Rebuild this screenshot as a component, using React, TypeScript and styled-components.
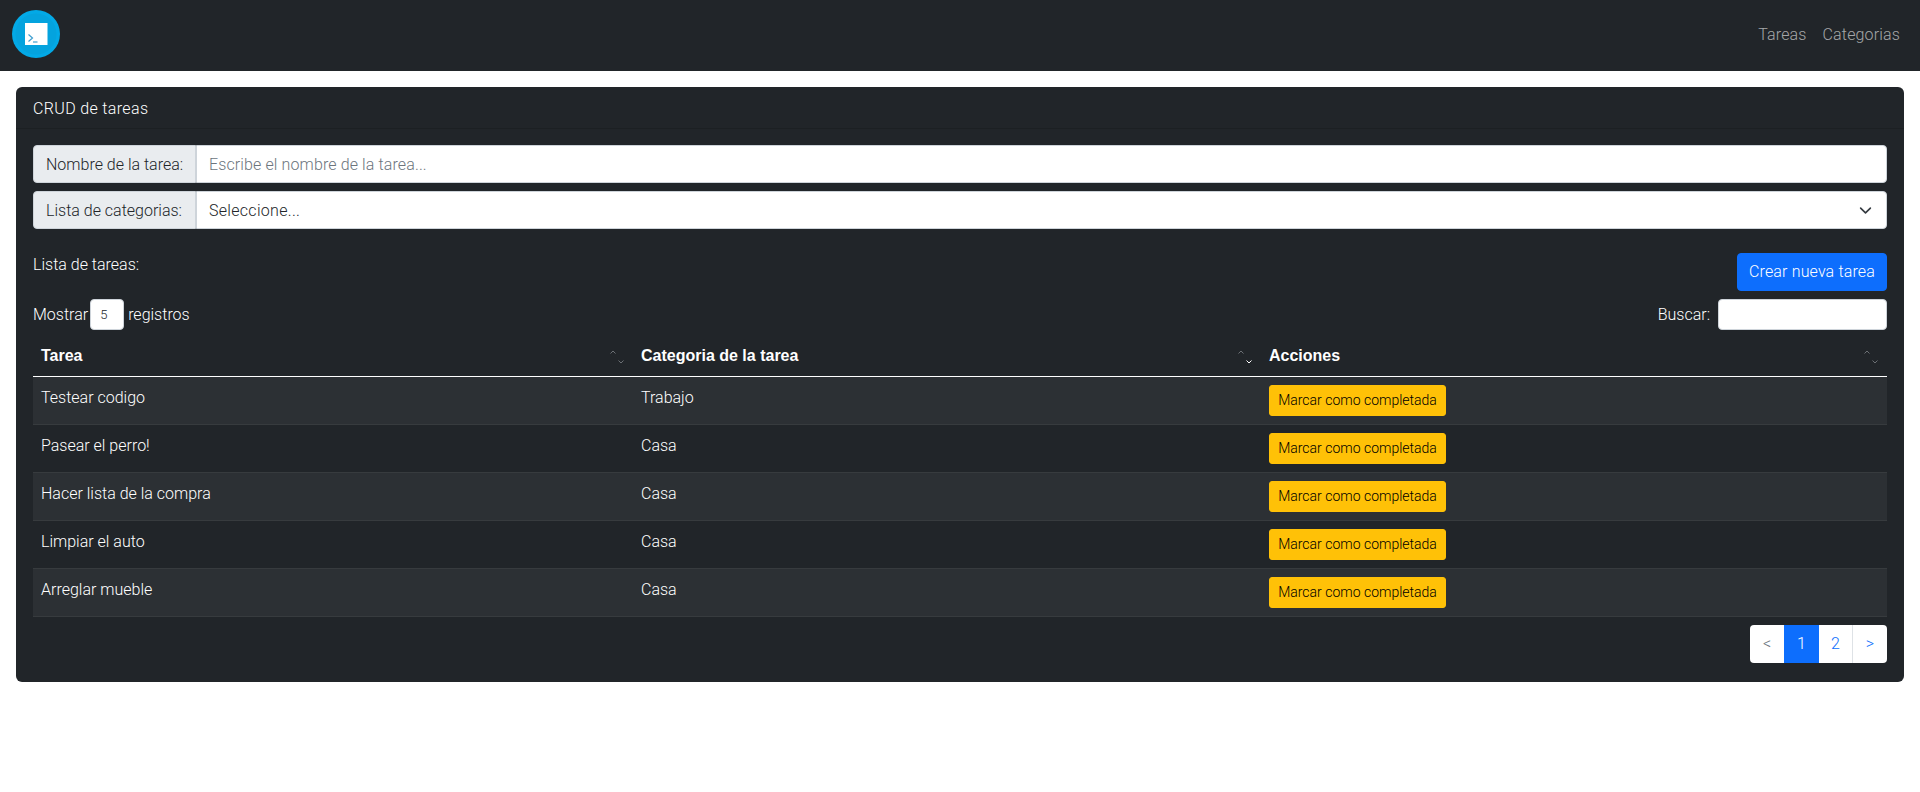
import { createGlobalStyle } from "styled-components"
import styled from "styled-components"

const GlobalStyle = createGlobalStyle`
  html, body {
    margin: 0;
    background: #fff;
    font-family: Roboto, "Liberation Sans", sans-serif;
    font-size: 16px;
    font-weight: 300;
    line-height: 24px;
    color: #212529;
  }
  * { box-sizing: border-box; }
`

const Navbar = styled.nav`
  height: 71px;
  background: #212529;
  display: flex;
  align-items: center;
  justify-content: space-between;
  padding: 0 20px 0 12px;
`

const LogoBadge = styled.div`
  width: 48px;
  height: 48px;
  margin-bottom: 3px;
`

const NavLinks = styled.div`
  display: flex;
  gap: 16px;
  margin-bottom: 2px;
  letter-spacing: 0.15px;
`

const NavLink = styled.a`
  color: rgba(255, 255, 255, 0.6);
`

const Main = styled.main`
  padding: 16px;
`

const Card = styled.section`
  background: #212529;
  border-radius: 6px;
  color: #fff;
  height: 595px;
`

const CardHeader = styled.header`
  height: 42px;
  padding: 10px 17px 0;
  letter-spacing: 0.35px;
  border-bottom: 1px solid rgba(0, 0, 0, 0.125);
`

const CardBody = styled.div`
  padding: 16px 17px;
`

const InputGroup = styled.div`
  display: flex;
  height: 38px;
  margin-bottom: 8px;
`

const GroupLabel = styled.label`
  width: 163px;
  flex: none;
  background: #e9ecef;
  border: 1px solid #ced4da;
  border-radius: 4px 0 0 4px;
  color: #212529;
  padding: 6px 12px 0;
  line-height: 26px;
  white-space: nowrap;
`

const GroupInput = styled.input`
  flex: 1;
  min-width: 0;
  border: 1px solid #ced4da;
  border-radius: 0 4px 4px 0;
  padding: 1px 12px 0;
  font: inherit;
  letter-spacing: 0.12px;
  color: #212529;
  outline: none;
  &::placeholder { color: #6c757d; opacity: 1; }
`

const GroupSelect = styled.div`
  flex: 1;
  display: flex;
  align-items: center;
  justify-content: space-between;
  background: #fff;
  border: 1px solid #ced4da;
  border-radius: 0 4px 4px 0;
  padding: 1px 14px 0 12px;
  letter-spacing: 0.3px;
  color: #212529;
`

const ListHeader = styled.div`
  display: flex;
  justify-content: space-between;
  margin-top: 24px;
  height: 38px;
`

const PrimaryButton = styled.button`
  width: 150px;
  height: 38px;
  padding: 0;
  background: #0d6efd;
  border: 1px solid #0d6efd;
  border-radius: 4px;
  color: #fff;
  font: inherit;
  letter-spacing: 0.15px;
`

const TableTools = styled.div`
  display: flex;
  justify-content: space-between;
  align-items: center;
  height: 31px;
  margin-top: 8px;
`

const ToolGroup = styled.div`
  display: flex;
  align-items: center;
  gap: 4px;
`

const LengthBox = styled.div`
  width: 34px;
  height: 31px;
  margin-left: -2px;
  background: #fff;
  border: 1px solid #ced4da;
  border-radius: 4px;
  color: #212529;
  font-size: 13px;
  line-height: 29px;
  padding-left: 9px;
`

const SearchBox = styled.input`
  width: 169px;
  height: 31px;
  margin-left: 4px;
  border: 1px solid #ced4da;
  border-radius: 4px;
  outline: none;
`

const Table = styled.table`
  width: 100%;
  border-collapse: collapse;
  table-layout: fixed;
`

const HeadCell = styled.th<{ $width: number }>`
  position: relative;
  width: ${({ $width }) => $width}px;
  height: 46px;
  padding: 6px 8px 0;
  text-align: left;
  font-family: "Liberation Sans", Arial, sans-serif;
  font-weight: 700;
  border-bottom: 1px solid #fff;
`

const SortMark = styled.span<{ $dir: "up" | "down"; $active?: boolean }>`
  position: absolute;
  right: ${({ $dir }) => ($dir === "up" ? 17 : 9)}px;
  top: ${({ $dir }) => ($dir === "up" ? 20 : 30)}px;
  width: 6px;
  height: 4px;
  color: ${({ $active }) => ($active ? "#fff" : "#6c7075")};
  svg { display: block; }
`

const Row = styled.tr<{ $odd: boolean }>`
  background: ${({ $odd }) => ($odd ? "#2c3034" : "#212529")};
`

const Cell = styled.td`
  height: 48px;
  padding: 8px;
  line-height: 26px;
  vertical-align: top;
  border-bottom: 1px solid #373b3e;
`

const ActionButton = styled.button`
  width: 177px;
  height: 31px;
  padding: 0;
  background: #ffc107;
  border: 1px solid #ffc107;
  border-radius: 3px;
  color: #000;
  font: inherit;
  font-size: 14px;
  display: block;
`

const Pager = styled.div`
  display: flex;
  justify-content: flex-end;
  margin-top: 8px;
`

const PageItem = styled.a<{ $width: number; $active?: boolean; $muted?: boolean; $first?: boolean; $last?: boolean }>`
  height: 38px;
  width: ${({ $width }) => $width}px;
  display: flex;
  align-items: center;
  justify-content: center;
  background: ${({ $active }) => ($active ? "#0d6efd" : "#fff")};
  color: ${({ $active, $muted }) => ($active ? "#fff" : $muted ? "#6c757d" : "#0d6efd")};
  border-left: ${({ $last }) => ($last ? "1px solid #dee2e6" : "0")};
  border-radius: ${({ $first, $last }) => ($first ? "4px 0 0 4px" : $last ? "0 4px 4px 0" : "0")};
`

const Chevron = () => (
  <svg width="13" height="13" viewBox="0 0 16 16" fill="none">
    <path d="M2 5l6 6 6-6" stroke="#343a40" strokeWidth="2" strokeLinecap="round" strokeLinejoin="round" />
  </svg>
)

const Logo = () => (
  <svg width="48" height="48" viewBox="0 0 48 48">
    <circle cx="24" cy="24" r="24" fill="#03a9e6" />
    <circle cx="24" cy="24" r="20.5" fill="#04a3de" />
    <rect x="13" y="13" width="22.5" height="22" fill="#fff" />
    <path d="M16.5 24.5l4 3.5-4 3.5" fill="none" stroke="#3f9fd0" strokeWidth="1.2" />
    <path d="M21 32h4.5" fill="none" stroke="#3f9fd0" strokeWidth="1.2" />
  </svg>
)

const Caret = ({ dir }: { dir: "up" | "down" }) => (
  <svg width="6" height="4" viewBox="0 0 6 4" fill="none">
    <path d={dir === "up" ? "M0.5 3.5L3 1l2.5 2.5" : "M0.5 0.5L3 3l2.5-2.5"} stroke="currentColor" strokeWidth="1" />
  </svg>
)

const columns = [
  { label: "Tarea", width: 600 },
  { label: "Categoria de la tarea", width: 628, active: true },
  { label: "Acciones", width: 626 },
]

const tasks = [
  ["Testear codigo", "Trabajo"],
  ["Pasear el perro!", "Casa"],
  ["Hacer lista de la compra", "Casa"],
  ["Limpiar el auto", "Casa"],
  ["Arreglar mueble", "Casa"],
]

export default function App() {
  return (
    <>
      <GlobalStyle />
      <Navbar>
        <LogoBadge>
          <Logo />
        </LogoBadge>
        <NavLinks>
          <NavLink>Tareas</NavLink>
          <NavLink>Categorias</NavLink>
        </NavLinks>
      </Navbar>
      <Main>
        <Card>
          <CardHeader>CRUD de tareas</CardHeader>
          <CardBody>
            <InputGroup>
              <GroupLabel>Nombre de la tarea:</GroupLabel>
              <GroupInput placeholder="Escribe el nombre de la tarea..." />
            </InputGroup>
            <InputGroup>
              <GroupLabel>Lista de categorias:</GroupLabel>
              <GroupSelect>
                Seleccione...
                <Chevron />
              </GroupSelect>
            </InputGroup>
            <ListHeader>
              <span>Lista de tareas:</span>
              <PrimaryButton>Crear nueva tarea</PrimaryButton>
            </ListHeader>
            <TableTools>
              <ToolGroup>
                Mostrar
                <LengthBox>5</LengthBox>
                registros
              </ToolGroup>
              <ToolGroup>
                Buscar:
                <SearchBox />
              </ToolGroup>
            </TableTools>
            <Table>
              <thead>
                <tr>
                  {columns.map((col) => (
                    <HeadCell key={col.label} $width={col.width}>
                      {col.label}
                      <SortMark $dir="up">
                        <Caret dir="up" />
                      </SortMark>
                      <SortMark $dir="down" $active={col.active}>
                        <Caret dir="down" />
                      </SortMark>
                    </HeadCell>
                  ))}
                </tr>
              </thead>
              <tbody>
                {tasks.map(([name, category], i) => (
                  <Row key={name} $odd={i % 2 === 0}>
                    <Cell>{name}</Cell>
                    <Cell>{category}</Cell>
                    <Cell>
                      <ActionButton>Marcar como completada</ActionButton>
                    </Cell>
                  </Row>
                ))}
              </tbody>
            </Table>
            <Pager>
              <PageItem $width={34} $first $muted>&lt;</PageItem>
              <PageItem $width={35} $active>1</PageItem>
              <PageItem $width={33}>2</PageItem>
              <PageItem $width={35} $last>&gt;</PageItem>
            </Pager>
          </CardBody>
        </Card>
      </Main>
    </>
  )
}
